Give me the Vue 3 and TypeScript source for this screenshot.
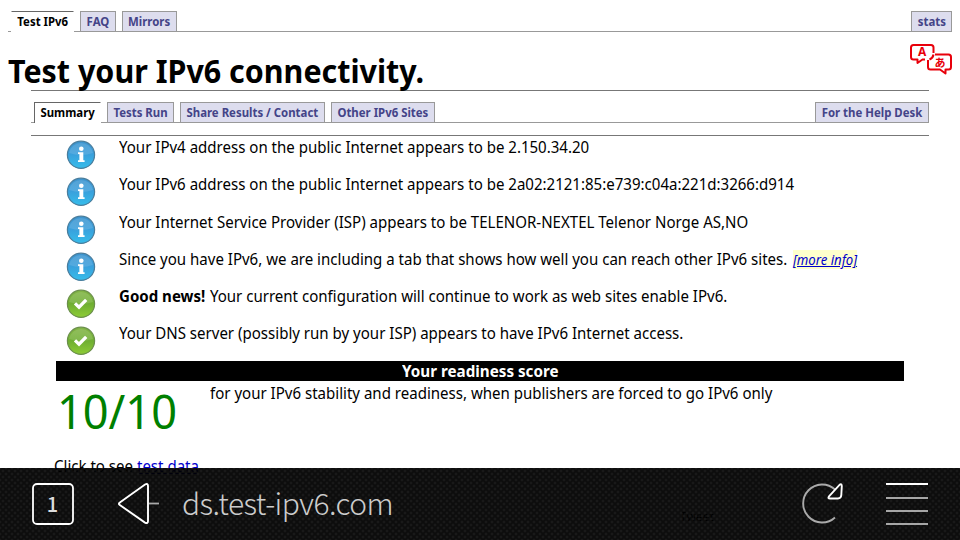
<script setup lang="ts">
interface Tab {
  label: string
  width: number
  active?: boolean
}

interface Result {
  kind: 'info' | 'ok'
  text: string
  lead?: string
  link?: string
}

const siteTabs: Tab[] = [
  { label: 'Test IPv6', width: 63, active: true },
  { label: 'FAQ', width: 36 },
  { label: 'Mirrors', width: 55 },
]

const testTabs: Tab[] = [
  { label: 'Summary', width: 67, active: true },
  { label: 'Tests Run', width: 67 },
  { label: 'Share Results / Contact', width: 145 },
  { label: 'Other IPv6 Sites', width: 104 },
]

const results: Result[] = [
  { kind: 'info', text: 'Your IPv4 address on the public Internet appears to be 2.150.34.20' },
  { kind: 'info', text: 'Your IPv6 address on the public Internet appears to be 2a02:2121:85:e739:c04a:221d:3266:d914' },
  { kind: 'info', text: 'Your Internet Service Provider (ISP) appears to be TELENOR-NEXTEL Telenor Norge AS,NO' },
  { kind: 'info', text: 'Since you have IPv6, we are including a tab that shows how well you can reach other IPv6 sites.', link: '[more info]' },
  { kind: 'ok', lead: 'Good news!', text: 'Your current configuration will continue to work as web sites enable IPv6.' },
  { kind: 'ok', text: 'Your DNS server (possibly run by your ISP) appears to have IPv6 Internet access.' },
]
</script>

<template>
  <div class="screen">
    <nav class="tabs site">
      <a v-for="t in siteTabs" :key="t.label" class="tab" :class="{ active: t.active }"
        :style="{ width: t.width + 'px' }"><span>{{ t.label }}</span></a>
      <span class="grow"></span>
      <a class="tab stats"><span>stats</span></a>
    </nav>

    <header class="head">
      <h1>Test your IPv6 connectivity.</h1>
      <svg class="lang" width="44" height="34" viewBox="0 0 44 34">
        <g fill="none" stroke="#e8000b" stroke-width="2" stroke-linejoin="round">
          <path d="M16 17.500H13.500L8.500 21V17.500H4.500Q2 17.500 2 15V5.500Q2 3 4.500 3H22Q24.500 3 24.500 5.500V11" />
          <path d="M24.500 12.500Q24 16 20.500 17.500" />
          <path d="M26 12.500H39.500Q42 12.500 42 15V25Q42 27.500 39.500 27.500H36.500V31.500L31 27.500H21.500Q19 27.500 19 25V18" />
        </g>
        <text x="13.200" y="14" text-anchor="middle" class="la">A</text>
        <text x="31" y="24.500" text-anchor="middle" class="lj">あ</text>
      </svg>
    </header>

    <main class="panel">
      <nav class="tabs test">
        <a v-for="t in testTabs" :key="t.label" class="tab" :class="{ active: t.active }"
          :style="{ width: t.width + 'px' }"><span>{{ t.label }}</span></a>
        <span class="grow"></span>
        <a class="tab desk"><span>For the Help Desk</span></a>
      </nav>

      <section class="body">
        <div v-for="r in results" :key="r.text" class="row">
          <svg class="badge" width="30" height="30" viewBox="0 0 30 30">
            <defs>
              <linearGradient id="blue" x1="0" y1="0" x2="0" y2="1">
                <stop offset="0" stop-color="#3d93cd" />
                <stop offset=".45" stop-color="#3a9edb" />
                <stop offset="1" stop-color="#35bdeb" />
              </linearGradient>
              <linearGradient id="green" x1="0" y1="0" x2="0" y2="1">
                <stop offset="0" stop-color="#83b547" />
                <stop offset=".5" stop-color="#6fae32" />
                <stop offset="1" stop-color="#8dcc35" />
              </linearGradient>
            </defs>
            <circle cx="15" cy="14.800" r="13.600" :fill="r.kind === 'info' ? 'url(#blue)' : 'url(#green)'"
              :stroke="r.kind === 'info' ? '#4a7d9c' : '#6b8f4c'" stroke-width="1.200" />
            <path d="M3 13A12.200 12.200 0 0 1 27 13Q15 17 3 13Z" fill="#fff" opacity=".13" />
            <g v-if="r.kind === 'info'" fill="#fff">
              <circle cx="15.300" cy="8.800" r="2.300" />
              <path d="M12 12.200H17.300V20.200H18.600V22H12V20.200H13.400V14H12Z" />
            </g>
            <path v-else d="M9 14.400L13 18.200L20.200 10.800" fill="none" stroke="#fff" stroke-width="3.300" />
          </svg>
          <p class="msg narrow"><b v-if="r.lead">{{ r.lead }}</b><span>{{ r.text }}</span><a v-if="r.link" class="more">{{ r.link }}</a></p>
        </div>

        <h2 class="bar"><span>Your readiness score</span></h2>
        <div class="scorerow">
          <div class="score narrow">10/10</div>
          <p class="scoretext narrow">for your IPv6 stability and readiness, when publishers are forced to go IPv6 only</p>
        </div>
      </section>
      <p class="data narrow">Click to see <a>test data</a></p>
      <p class="tweet">Tweet</p>
    </main>

    <footer class="browser">
      <svg class="count" width="42" height="42" viewBox="0 0 42 42">
        <rect x="1" y="1" width="40" height="40" rx="4" fill="none" stroke="#fff" stroke-width="1.800" />
        <text x="20.500" y="28.500" text-anchor="middle">1</text>
      </svg>
      <svg class="back" width="42" height="42" viewBox="0 0 42 42">
        <path d="M1.800 19.600L27 1.500Q30 0 30 3V38Q30 41 27 39.600L1.800 22Q0 20.800 1.800 19.600Z" fill="none" stroke="#fff"
          stroke-width="1.900" />
        <path d="M31 20.500H41" stroke="#aaa" stroke-width="1.800" />
      </svg>
      <span class="url">ds.test-ipv6.com</span>
      <svg class="reload" width="42" height="42" viewBox="0 0 42 42">
        <path d="M33 34.500A19 19 0 1 1 33 6.500" fill="none" stroke="#aaa" stroke-width="1.900" />
        <path d="M27 13.400L37.500 1.900Q39.800 0.300 39.800 3L39.300 12Q39 15.500 36 15.500H28Q25.500 15.500 27 13.400Z" fill="#101010"
          stroke="#fff" stroke-width="1.900" />
      </svg>
      <svg class="menu" width="42" height="44" viewBox="0 0 42 44">
        <path d="M0 2H42" stroke="#fff" stroke-width="2" />
        <path d="M0 16H42M0 29H42M0 42H42" stroke="#a6a6a6" stroke-width="2" />
      </svg>
    </footer>
  </div>
</template>

<style>
body {
  margin: 0;
  background: #fff;
}
</style>

<style scoped>
.screen {
  position: relative;
  width: 960px;
  height: 540px;
  overflow: hidden;
  box-sizing: border-box;
  padding: 11px 8px 0;
  font-family: "Noto Sans", "Noto Sans CJK JP", sans-serif;
  font-size: 16px;
  color: #000;
  background: #fff;
}
h1, h2, p {
  margin: 0;
}
.narrow {
  transform: scaleX(0.94);
  transform-origin: 0 0;
}
.tabs {
  display: flex;
  align-items: flex-end;
  height: 20px;
  border-bottom: 1px solid #999;
}
.tab {
  display: flex;
  justify-content: center;
  box-sizing: border-box;
  height: 20px;
  border: 1px solid #999;
  border-bottom: 0;
  background: #dde;
  color: #448;
  font-size: 12px;
  font-weight: 700;
  line-height: 20px;
  white-space: nowrap;
}
.tab span {
  transform: scaleX(0.95);
}
.tab.active {
  height: 21px;
  margin-bottom: -1px;
  background: #fff;
  color: #000;
  border-color: #666;
  border-right-color: #fff;
}
.site {
  gap: 6px;
  padding-left: 3px;
}
.site .active {
  border-left-color: #fff;
}
.grow {
  flex: 1;
}
.stats {
  width: 41px;
}
.head {
  display: flex;
  justify-content: space-between;
  height: 58px;
}
h1 {
  padding-top: 17px;
  font-size: 32px;
  line-height: 43px;
  white-space: nowrap;
  transform: scaleX(0.951);
  transform-origin: 0 0;
}
.lang {
  flex: none;
  margin: 10px -1px 0 0;
}
.la {
  font: 700 12px "Noto Sans", sans-serif;
  fill: #e8000b;
}
.lj {
  font: 700 11px "Noto Sans CJK JP", sans-serif;
  fill: #e8000b;
}
.panel {
  margin: 0 23px;
  border-top: 1px solid #777;
}
.test {
  margin-top: 11px;
  gap: 6px;
  padding-left: 3px;
}
.desk {
  width: 114px;
}
.body {
  margin-top: 12px;
  padding: 4px 25px 0;
  border-top: 1px solid #777;
}
.row {
  display: flex;
  height: 37.250px;
  padding-left: 10px;
}
.badge {
  flex: none;
  margin-right: 23px;
}
.msg {
  line-height: 22px;
  margin-top: -4px;
  white-space: nowrap;
}
.msg b {
  margin-right: 5px;
}
.more {
  margin-left: 6px;
  font-size: 14px;
  font-style: italic;
  color: #00c;
  background: #ffc;
  text-decoration: underline;
}
.bar {
  display: flex;
  justify-content: center;
  height: 20px;
  margin-top: -2.500px;
  background: #000;
  color: #fff;
  font-size: 16px;
  line-height: 20px;
}
.bar span {
  transform: scaleX(0.95);
}
.scorerow {
  display: flex;
  height: 74px;
}
.score {
  flex: none;
  width: 154px;
  padding-left: 1px;
  box-sizing: border-box;
  font-size: 48px;
  line-height: 60px;
  color: #008000;
}
.scoretext {
  line-height: 22px;
  padding-top: 1px;
  white-space: nowrap;
}
.data {
  margin-left: 23px;
  line-height: 22px;
}
.data a {
  color: #00c;
  text-decoration: underline;
}
.tweet {
  margin: 32px 0 0 649px;
  font-size: 12px;
  line-height: 16px;
}
.browser {
  position: absolute;
  left: 0;
  right: 0;
  bottom: 0;
  display: flex;
  align-items: center;
  box-sizing: border-box;
  height: 72px;
  padding: 0 32px;
  background-color: rgba(0, 0, 0, 0.95);
  background-image: radial-gradient(circle, #191919 1px, transparent 1.800px), radial-gradient(circle, #191919 1px, transparent 1.800px);
  background-size: 6px 6px;
  background-position: 0 0, 3px 3px;
}
.count text {
  font: 500 20px "Noto Sans CJK SC", sans-serif;
  fill: #ddd;
}
.back {
  margin-left: 44px;
}
.url {
  flex: 1;
  margin-left: 22px;
  padding-bottom: 4px;
  color: #ccc;
  font-family: "Noto Sans CJK SC", "Open Sans", sans-serif;
  font-weight: 300;
  font-size: 30px;
  letter-spacing: -0.550px;
}
.reload {
  margin-right: 42px;
}
</style>
